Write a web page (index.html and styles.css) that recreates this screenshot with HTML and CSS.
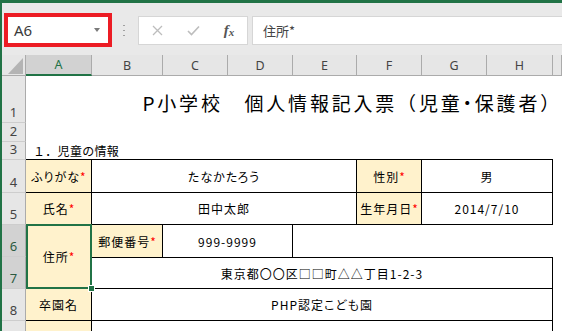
FILE: index.html
```html
<!DOCTYPE html>
<html>
<head>
  <link rel="stylesheet" href="styles.css">
</head>
<body>
  <div class="app">
    <div class="topstrip"></div>

    <div class="formulabar">
      <div class="namebox">
        <span>A6</span>
        <span class="namebox-arrow"></span>
      </div>
      <span class="grip"></span>
      <div class="fnbox">
        <span class="fn-btn">
          <svg width="11" height="11" viewBox="0 0 11 11"><path d="M1 1L10 10M10 1L1 10" stroke="#bdbdbd" stroke-width="1.3" fill="none"/></svg>
        </span>
        <span class="fn-btn">
          <svg width="13" height="11" viewBox="0 0 13 11"><path d="M1 6L4.5 9.5L12 1.5" stroke="#bdbdbd" stroke-width="1.6" fill="none"/></svg>
        </span>
        <span class="fn-btn"><span class="fx-f">f</span><span class="fx-x">x</span></span>
      </div>
      <div class="formula-input">住所*</div>
    </div>

    <div class="sheet">
      <!-- column headers -->
      <div class="corner">
        <svg width="24" height="21" viewBox="0 0 24 21"><path d="M21 3V19H6Z" fill="#b4b4b4"/></svg>
      </div>
      <div class="colhead sel">A</div>
      <div class="colhead">B</div>
      <div class="colhead">C</div>
      <div class="colhead">D</div>
      <div class="colhead">E</div>
      <div class="colhead">F</div>
      <div class="colhead">G</div>
      <div class="colhead">H</div>
      <div class="colhead"></div>

      <!-- row 1 -->
      <div class="rh">1</div>
      <div class="cell title">P小学校　個人情報記入票（児童<span class="dot">・</span>保護者）</div>

      <!-- row 2 -->
      <div class="rh">2</div>

      <!-- row 3 -->
      <div class="rh">3</div>
      <div class="cell section">１．児童の情報</div>

      <!-- row 4 -->
      <div class="rh">4</div>
      <div class="cell box label">ふりがな<span class="req">*</span></div>
      <div class="cell box span4">たなかたろう</div>
      <div class="cell box label">性別<span class="req">*</span></div>
      <div class="cell box span2">男</div>

      <!-- row 5 -->
      <div class="rh">5</div>
      <div class="cell box label">氏名<span class="req">*</span></div>
      <div class="cell box span4">田中太郎</div>
      <div class="cell box label">生年月日<span class="req">*</span></div>
      <div class="cell box span2">2014/7/10</div>

      <!-- row 6 -->
      <div class="rh sel">6</div>
      <div class="cell box label rows2 selected">住所<span class="req">*</span><span class="fill-handle"></span></div>
      <div class="cell label side">郵便番号<span class="req">*</span></div>
      <div class="cell side span2">999-9999</div>
      <div class="span4"></div>

      <!-- row 7 -->
      <div class="rh sel">7</div>
      <div class="cell box top span7">東京都〇〇区□□町△△丁目1-2-3</div>

      <!-- row 8 -->
      <div class="rh">8</div>
      <div class="cell box label">卒園名</div>
      <div class="cell box span7">PHP認定こども園</div>

      <!-- row 9 -->
      <div class="rh"></div>
      <div class="cell box label"></div>
      <div class="cell box span7"></div>
    </div>
  </div>
</body>
</html>
```

FILE: styles.css
```css
* {
  box-sizing: border-box;
}

body {
  margin: 0;
  width: 562px;
  height: 331px;
  overflow: hidden;
  background: #fff;
  font-family: "Noto Sans", "Noto Sans CJK JP", sans-serif;
}

.app {
  height: 331px;
  border-left: 2px solid #217346;
}

.topstrip {
  height: 3px;
  background: #217346;
}

/* formula bar */
.formulabar {
  display: flex;
  align-items: center;
  height: 52px;
  padding: 2px 0 0 2px;
  background: #e9e9e9;
}

.namebox {
  display: flex;
  align-items: center;
  justify-content: space-between;
  width: 108px;
  height: 34px;
  padding: 0 8px 0 6px;
  border: 4px solid #ec1c24;
  background: #fff;
  font-size: 15px;
  color: #3a3a3a;
}

.namebox-arrow {
  border-left: 3.5px solid transparent;
  border-right: 3.5px solid transparent;
  border-top: 4px solid #7a7a7a;
}

.grip {
  width: 2px;
  height: 14px;
  margin: 0 13px 0 11px;
  background-image: radial-gradient(circle, #a0a0a0 0.9px, transparent 1.1px);
  background-size: 2px 5px;
}

.fnbox {
  display: flex;
  width: 110px;
  height: 29px;
  margin-right: 4px;
  border: 1px solid #d6d6d6;
  background: #fff;
}

.fn-btn {
  display: flex;
  align-items: center;
  justify-content: center;
  width: 36px;
}

.fx-f {
  font-family: "Liberation Serif", serif;
  font-style: italic;
  font-weight: bold;
  font-size: 15px;
  color: #555;
}

.fx-x {
  font-family: "Liberation Serif", serif;
  font-style: italic;
  font-weight: bold;
  font-size: 11px;
  color: #555;
  margin-top: 4px;
}

.formula-input {
  flex: 1;
  display: flex;
  align-items: center;
  height: 29px;
  padding-left: 10px;
  border: 1px solid #d6d6d6;
  border-right: none;
  background: #fff;
  font-family: "Noto Sans CJK JP", sans-serif;
  font-size: 13px;
  color: #444;
}

/* sheet */
.sheet {
  display: grid;
  grid-template-columns: 24px 66px 71px 65px 65px 64px 65px 65px 66px 1fr;
  grid-template-rows: 21px 47px 19px 18px 33px 32px 32px 32px 32px 32px;
}

.corner {
  background: #e6e6e6;
  border-right: 1px solid #ababab;
  border-bottom: 1px solid #ababab;
}

.corner svg {
  display: block;
}

.colhead {
  display: flex;
  align-items: center;
  justify-content: center;
  background: #e6e6e6;
  border-right: 1px solid #ababab;
  border-bottom: 1px solid #ababab;
  font-size: 12.5px;
  color: #444;
}

.colhead.sel {
  background: #d2d2d2;
  border-bottom: 2px solid #217346;
  color: #217346;
}

.rh {
  grid-column: 1;
  display: flex;
  align-items: flex-end;
  justify-content: center;
  padding-bottom: 3px;
  background: #e6e6e6;
  border-right: 1px solid #ababab;
  border-bottom: 1px solid #cdcdcd;
  font-size: 13px;
  line-height: 1;
  color: #444;
}

.rh.sel {
  background: #d2d2d2;
  color: #2b5a40;
}

.cell {
  display: flex;
  align-items: center;
  justify-content: center;
  font-family: "Noto Sans CJK JP", sans-serif;
  font-size: 12px;
  letter-spacing: 1px;
  font-feature-settings: "palt";
  color: #000;
  white-space: nowrap;
}

.box {
  border-right: 1px solid #000;
  border-bottom: 1px solid #000;
}

.side {
  border-right: 1px solid #000;
}

.top {
  border-top: 1px solid #000;
}

.label {
  background: #fff2cc;
}

.req {
  color: #f00;
  font-size: 12px;
  letter-spacing: 0;
  vertical-align: 3px;
}

.span2 {
  grid-column: span 2;
}

.span4 {
  grid-column: span 4;
}

.span7 {
  grid-column: span 7;
}

.rows2 {
  grid-row: span 2;
}

.title {
  grid-column: span 9;
  justify-content: flex-end;
  padding: 5px 0 0 0;
  font-size: 19px;
  letter-spacing: 2.8px;
  font-feature-settings: normal;
}

.dot {
  font-feature-settings: "palt";
}

.section {
  grid-column: span 8;
  justify-content: flex-start;
  padding-left: 7px;
  border-bottom: 1px solid #000;
  letter-spacing: 0.3px;
  font-feature-settings: normal;
}

/* active selection A6:A7 */
.selected {
  position: relative;
  z-index: 1;
}

.selected::after {
  content: "";
  position: absolute;
  top: -1px;
  left: 0;
  right: -1px;
  bottom: -1px;
  border: 2px solid #217346;
}

.fill-handle {
  position: absolute;
  right: -4px;
  bottom: -4px;
  z-index: 2;
  width: 7px;
  height: 7px;
  border: 1px solid #fff;
  background: #217346;
}
```
